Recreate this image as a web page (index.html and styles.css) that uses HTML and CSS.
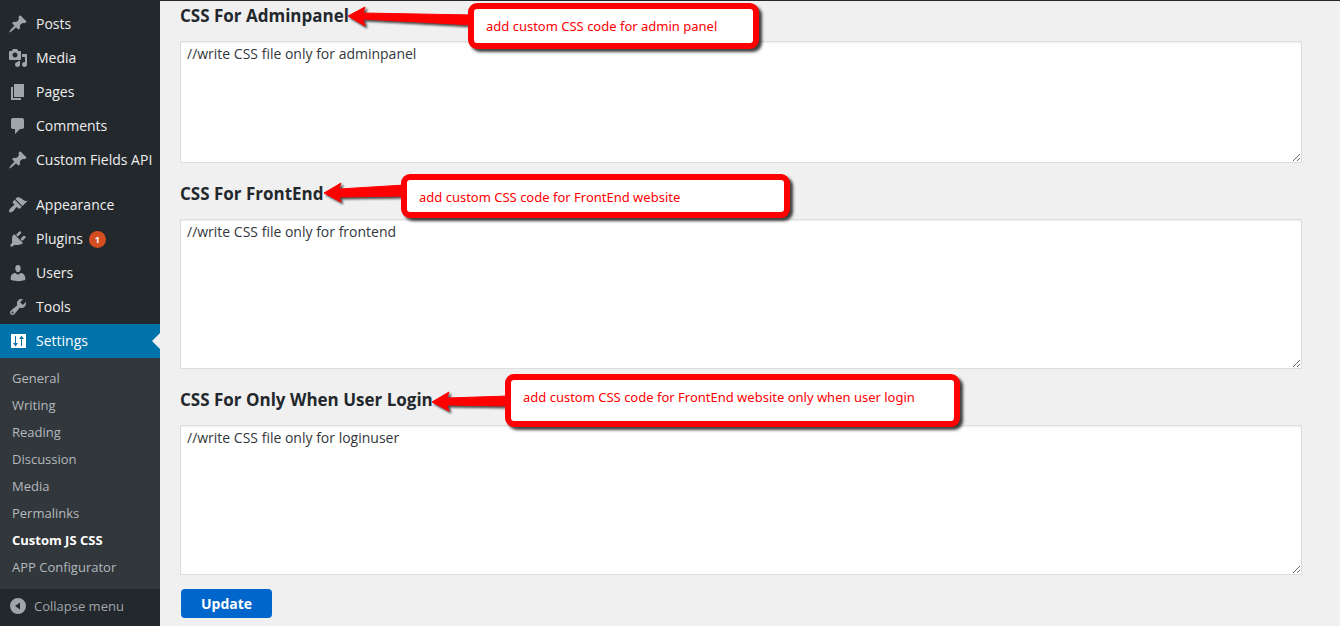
FILE: index.html
```
<!DOCTYPE html>
<html lang="en">
<head>
<meta charset="utf-8">
<title>Custom JS CSS</title>
<link rel="stylesheet" href="styles.css">
</head>
<body>
<div class="admin">
  <nav class="sidebar" aria-label="Main menu">
    <ul class="menu">
      <li><a class="menu-link" href="#"><svg class="icon" viewBox="0 0 20 20" aria-hidden="true"><path d="M10.44 3.02l1.82-1.82 6.36 6.35-1.83 1.82c-1.05-.68-2.48-.57-3.41.36l-.75.75c-.92.93-1.04 2.35-.35 3.41l-1.83 1.82-2.41-2.41-2.8 2.79c-.42.42-3.38 2.71-3.8 2.29s1.86-3.39 2.28-3.81l2.79-2.79L4.1 9.36l1.83-1.82c1.05.69 2.48.57 3.4-.36l.75-.75c.93-.92 1.05-2.35.36-3.41z"/></svg>Posts</a></li>
      <li><a class="menu-link" href="#"><svg class="icon" viewBox="0 0 20 20" aria-hidden="true"><path d="M13 11V4c0-.55-.45-1-1-1h-1.67L9 1H5L3.67 3H2c-.55 0-1 .45-1 1v7c0 .55.45 1 1 1h10c.55 0 1-.45 1-1zM7 4.5c1.38 0 2.5 1.12 2.5 2.5S8.38 9.5 7 9.5 4.5 8.38 4.5 7 5.62 4.5 7 4.5zM14 6h5v10.5c0 1.38-1.12 2.5-2.5 2.5S14 17.88 14 16.5s1.12-2.5 2.5-2.5c.17 0 .34.02.5.05V9h-3V6zm-4 8.05V13h2v3.5c0 1.38-1.12 2.5-2.5 2.5S7 17.88 7 16.5 8.12 14 9.5 14c.17 0 .34.02.5.05z"/></svg>Media</a></li>
      <li><a class="menu-link" href="#"><svg class="icon" viewBox="0 0 20 20" aria-hidden="true"><path d="M6 15V2h10v13H6zm-1 1h8v2H3V5h2v11z"/></svg>Pages</a></li>
      <li><a class="menu-link" href="#"><svg class="icon" viewBox="0 0 20 20" aria-hidden="true"><path d="M5 2h9c1.1 0 2 .9 2 2v7c0 1.1-.9 2-2 2h-2l-5 5v-5H5c-1.1 0-2-.9-2-2V4c0-1.1.9-2 2-2z"/></svg>Comments</a></li>
      <li><a class="menu-link" href="#"><svg class="icon" viewBox="0 0 20 20" aria-hidden="true"><path d="M10.44 3.02l1.82-1.82 6.36 6.35-1.83 1.82c-1.05-.68-2.48-.57-3.41.36l-.75.75c-.92.93-1.04 2.35-.35 3.41l-1.83 1.82-2.41-2.41-2.8 2.79c-.42.42-3.38 2.71-3.8 2.29s1.86-3.39 2.28-3.81l2.79-2.79L4.1 9.36l1.83-1.82c1.05.69 2.48.57 3.4-.36l.75-.75c.93-.92 1.05-2.35.36-3.41z"/></svg>Custom Fields API</a></li>
      <li class="menu-group"><a class="menu-link" href="#"><svg class="icon" viewBox="0 0 20 20" aria-hidden="true"><path d="M14.48 11.06L7.41 3.99l1.5-1.5c.5-.56 2.3-.47 3.51.32 1.21.8 1.43 1.28 2.91 2.1 1.18.64 2.45 1.26 4.45.85zm-.71.71L6.7 4.7 4.93 6.47c-.39.39-.39 1.02 0 1.41l1.06 1.06c.39.39.39 1.03 0 1.42-.6.6-1.43 1.11-2.21 1.69-.35.26-.7.53-1.01.84C1.43 14.23.4 16.08 1.4 17.07c.99 1 2.84-.03 4.18-1.36.31-.31.58-.66.85-1.02.57-.78 1.08-1.61 1.69-2.21.39-.39 1.02-.39 1.41 0l1.06 1.06c.39.39 1.02.39 1.41 0z"/></svg>Appearance</a></li>
      <li><a class="menu-link" href="#"><svg class="icon" viewBox="0 0 20 20" aria-hidden="true"><path d="M13.11 4.36L9.87 7.6 8 5.73l3.24-3.24c.35-.34 1.05-.2 1.56.32.52.51.66 1.21.31 1.55zm-8 1.77l.91-1.12 9.01 9.01-1.19.84c-.71.71-2.63 1.16-3.82 1.16H6.14L4.9 17.26c-.59.59-1.54.59-2.12 0-.59-.58-.59-1.53 0-2.12l1.24-1.24v-3.88c0-1.13.4-3.19 1.09-3.89zm7.26 3.97l3.24-3.24c.34-.35 1.04-.21 1.55.31.52.51.66 1.21.31 1.55l-3.24 3.25z"/></svg>Plugins <span class="count">1</span></a></li>
      <li><a class="menu-link" href="#"><svg class="icon" viewBox="0 0 20 20" aria-hidden="true"><path d="M10 9.25c-2.27 0-2.73-3.44-2.73-3.44C7 4.02 7.82 2 9.97 2c2.16 0 2.98 2.02 2.71 3.81 0 0-.41 3.44-2.68 3.44zm0 2.57L12.72 10c2.39 0 4.52 2.33 4.52 4.53v2.49s-3.65 1.13-7.24 1.13c-3.65 0-7.24-1.13-7.24-1.13v-2.49c0-2.25 1.94-4.48 4.47-4.48z"/></svg>Users</a></li>
      <li><a class="menu-link" href="#"><svg class="icon" viewBox="0 0 20 20" aria-hidden="true"><path d="M16.68 9.77c-1.34 1.34-3.3 1.67-4.95.99l-5.41 6.52c-.99.99-2.59.99-3.58 0s-.99-2.59 0-3.57l6.52-5.42c-.68-1.65-.35-3.61.99-4.95 1.28-1.28 3.12-1.62 4.72-1.06l-2.89 2.89 2.82 2.82 2.86-2.87c.53 1.58.18 3.39-1.08 4.65zM3.81 16.21c.4.39 1.04.39 1.43 0 .4-.4.4-1.04 0-1.43-.39-.4-1.03-.4-1.43 0-.39.39-.39 1.03 0 1.43z"/></svg>Tools</a></li>
      <li>
        <a class="menu-link menu-link-current" href="#"><svg class="icon" viewBox="0 0 20 20" aria-hidden="true"><path fill-rule="evenodd" d="M3 3h15v14H3zM7 5v7H5l2.500 3.500L10 12H8V5zM13 15V8h-2l2.500-3.500L16 8h-2v7z"/></svg>Settings</a>
        <ul class="submenu">
          <li><a class="submenu-link" href="#">General</a></li>
          <li><a class="submenu-link" href="#">Writing</a></li>
          <li><a class="submenu-link" href="#">Reading</a></li>
          <li><a class="submenu-link" href="#">Discussion</a></li>
          <li><a class="submenu-link" href="#">Media</a></li>
          <li><a class="submenu-link" href="#">Permalinks</a></li>
          <li><a class="submenu-link submenu-link-current" href="#">Custom JS CSS</a></li>
          <li><a class="submenu-link" href="#">APP Configurator</a></li>
        </ul>
      </li>
    </ul>
    <button class="collapse" type="button"><svg class="icon" viewBox="0 0 20 20" aria-hidden="true"><path fill-rule="evenodd" d="M10 2a8 8 0 1 1 0 16 8 8 0 0 1 0-16zM12 6.500L7 10l5 3.500z"/></svg>Collapse menu</button>
  </nav>

  <main class="content">
    <form class="settings">
      <section class="field">
        <label class="field-title" for="css-admin">CSS For Adminpanel</label>
        <textarea class="code code-short" id="css-admin" spellcheck="false">//write CSS file only for adminpanel</textarea>
        <svg class="arrow arrow-admin" viewBox="0 0 130 24" aria-hidden="true"><path d="M1 11L18 2 16 8 126 10V20L16 14 18 21Z"/></svg>
        <div class="callout callout-admin">add custom CSS code for admin panel</div>
      </section>
      <section class="field">
        <label class="field-title" for="css-front">CSS For FrontEnd</label>
        <textarea class="code" id="css-front" spellcheck="false">//write CSS file only for frontend</textarea>
        <svg class="arrow arrow-front" viewBox="0 0 86 24" aria-hidden="true"><path d="M1 12L18 2 16 8 82 4V15L16 16 18 21Z"/></svg>
        <div class="callout callout-front">add custom CSS code for FrontEnd website</div>
      </section>
      <section class="field">
        <label class="field-title" for="css-login">CSS For Only When User Login</label>
        <textarea class="code" id="css-login" spellcheck="false">//write CSS file only for loginuser</textarea>
        <svg class="arrow arrow-login" viewBox="0 0 80 24" aria-hidden="true"><path d="M1 12L18 2 16 8 78 6V16L16 15 18 21Z"/></svg>
        <div class="callout callout-login">add custom CSS code for FrontEnd website only when user login</div>
      </section>
      <button class="update" type="submit">Update</button>
    </form>
  </main>
</div>
</body>
</html>
```
FILE: styles.css
```
* {
  box-sizing: border-box;
}

body {
  margin: 0;
  background: #f0f0f0;
  color: #23282d;
  font-family: "Open Sans", "Noto Sans", sans-serif;
  font-size: 14px;
}

ul {
  margin: 0;
  padding: 0;
  list-style: none;
}

.admin {
  display: flex;
  min-height: 100vh;
  border-top: 1px solid #23282d;
}

/* Sidebar */
.sidebar {
  flex: 0 0 160px;
  padding-top: 6px;
  background: #23282d;
}

.menu-group {
  margin-top: 11px;
}

.menu-link {
  display: flex;
  align-items: flex-start;
  gap: 8px;
  height: 34px;
  padding-left: 8px;
  color: #eee;
  line-height: 33px;
  text-decoration: none;
  white-space: nowrap;
}

.icon {
  flex: none;
  width: 20px;
  height: 20px;
  fill: #a0a5aa;
}

.menu-link .icon {
  margin-top: 7px;
}

.menu-link-current {
  position: relative;
  background: #0073aa;
  color: #fff;
}

.menu-link-current .icon {
  fill: #fff;
}

.menu-link-current::after {
  position: absolute;
  top: 9px;
  right: 0;
  border: 8px solid transparent;
  border-left-width: 0;
  border-right-color: #f0f0f0;
  content: "";
}

.count {
  width: 17px;
  margin-top: 9px;
  margin-left: -2px;
  border-radius: 9px;
  background: #d54e21;
  color: #fff;
  font-size: 9px;
  font-weight: 700;
  line-height: 17px;
  text-align: center;
}

.submenu {
  padding: 7px 0 8px;
  background: #32373c;
}

.submenu-link {
  display: block;
  padding-left: 12px;
  color: #b4b9be;
  font-size: 13px;
  line-height: 27px;
  text-decoration: none;
}

.submenu-link-current {
  color: #fff;
  font-weight: 700;
}

.collapse {
  display: flex;
  align-items: center;
  gap: 6px;
  width: 100%;
  height: 34px;
  padding: 0 0 0 8px;
  border: 0;
  background: none;
  color: #a0a5aa;
  font: inherit;
  font-size: 13px;
}

/* Content */
.content {
  flex: 1;
  min-width: 0;
  padding: 1px 38px 8px 20px;
}

.settings {
  display: flex;
  flex-direction: column;
  align-items: flex-start;
}

.field {
  position: relative;
  width: 100%;
  margin-bottom: 17px;
}

.field:last-of-type {
  margin-bottom: 14px;
}

.field-title {
  display: block;
  margin-bottom: 12px;
  font-size: 17px;
  font-weight: 700;
  line-height: 27px;
}

.code {
  display: block;
  width: 100%;
  height: 150px;
  padding: 2px 6px;
  border: 1px solid #ddd;
  background: #fff;
  box-shadow: inset 0 1px 2px rgba(0, 0, 0, 0.07);
  color: #32373c;
  font: inherit;
  line-height: 20px;
  resize: both;
}

.code-short {
  height: 122px;
}

.update {
  height: 29px;
  margin-left: 1px;
  padding: 0 20px;
  border: 0;
  border-radius: 4px;
  background: #0066cc;
  color: #fff;
  font: inherit;
  font-weight: 700;
}

/* Annotations drawn over the form */
.callout {
  position: absolute;
  padding: 7px 12px;
  border: 6px solid #f00;
  border-radius: 9px;
  background: #fff;
  box-shadow: 3px 3px 3px rgba(0, 0, 0, 0.75);
  color: #f00;
  font-family: "Noto Sans", "Open Sans", sans-serif;
  font-size: 13px;
  line-height: 20px;
}

.callout-admin {
  top: 1px;
  left: 288px;
  width: 291px;
  height: 46px;
}

.callout-front {
  top: -6px;
  left: 221px;
  width: 389px;
  height: 44px;
}

.callout-login {
  top: -12px;
  left: 325px;
  width: 455px;
  height: 53px;
}

.arrow {
  position: absolute;
  height: 24px;
  fill: #f00;
  stroke: #f00;
  stroke-linejoin: round;
  filter: drop-shadow(2px 2px 1px rgba(0, 0, 0, 0.7));
}

.arrow-admin {
  top: 3px;
  left: 167px;
  width: 130px;
}

.arrow-front {
  top: 1px;
  left: 143px;
  width: 86px;
}

.arrow-login {
  top: 4px;
  left: 251px;
  width: 80px;
}
```
